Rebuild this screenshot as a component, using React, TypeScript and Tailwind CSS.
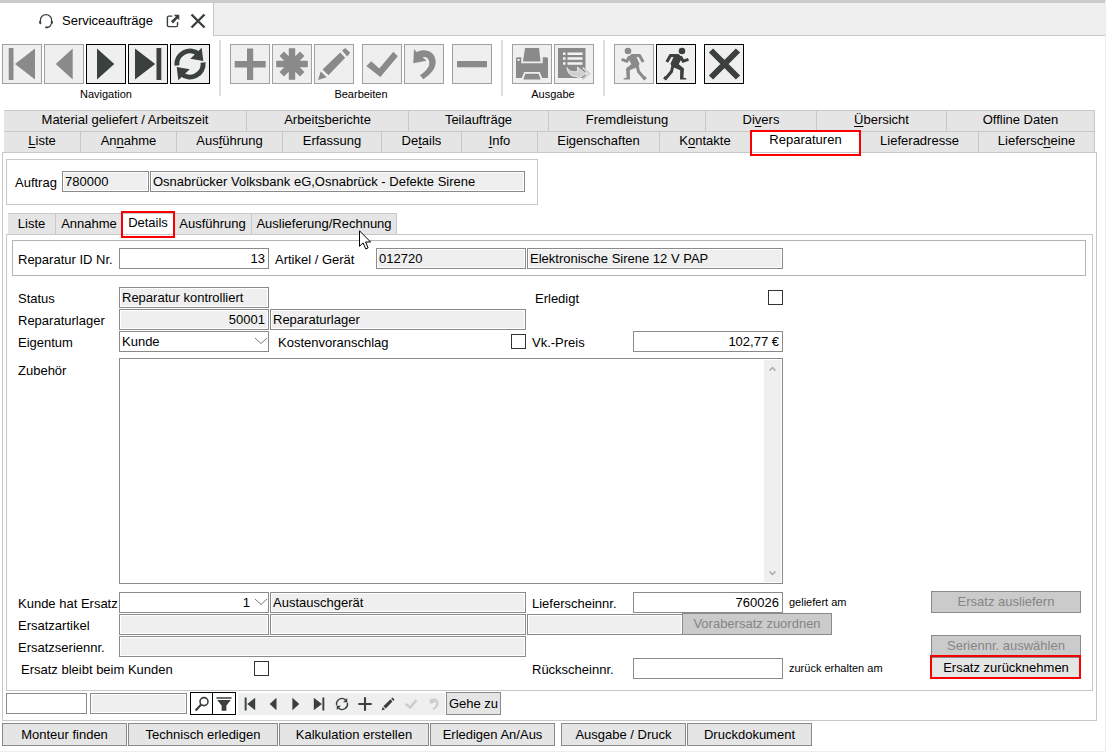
import React from 'react';
import clsx from 'clsx';

type IconProps = { className?: string };

/* ---------- Icons, drawn on a 40 x 40 grid ---------- */

const Icon: React.FC<IconProps & { children: React.ReactNode }> = ({ className = 'size-10', children }) => (
  <svg viewBox="0 0 40 40" fill="currentColor" className={clsx('shrink-0', className)} aria-hidden="true">
    {children}
  </svg>
);

const FirstIcon: React.FC<IconProps> = (p) => (
  <Icon {...p}>
    <path d="M6.7 4h4.8v32H6.7zM33 4.5v31L13 20z" />
  </Icon>
);

const PrevIcon: React.FC<IconProps> = (p) => (
  <Icon {...p}>
    <path d="M28.7 4.5v31L11.7 20z" />
  </Icon>
);

const NextIcon: React.FC<IconProps> = (p) => (
  <Icon {...p}>
    <path d="M11 4.5v31L28.3 20z" />
  </Icon>
);

const LastIcon: React.FC<IconProps> = (p) => (
  <Icon {...p}>
    <path d="M7 4.5v31L27.2 20zM28.5 4h4.8v32h-4.8z" />
  </Icon>
);

const RefreshIcon: React.FC<IconProps> = (p) => (
  <Icon {...p}>
    <path
      d="M6.9 21.500A13.200 13.200 0 0 1 29 10.500M33.100 18.500A13.200 13.200 0 0 1 11 29.500"
      fill="none"
      stroke="currentColor"
      strokeWidth="5"
    />
    <path d="M31.700 3.800l1.600 13.200-13-2.200zM8.300 36.200L6.700 23l13 2.200z" />
  </Icon>
);

const PlusIcon: React.FC<IconProps> = (p) => (
  <Icon {...p}>
    <path d="M17 4.5h6.2V17h12.5v6.4H23.2V36H17V23.4H4.7V17H17z" />
  </Icon>
);

const AsteriskIcon: React.FC<IconProps> = (p) => (
  <Icon {...p}>
    <path
      d="M20 4.2v31.6M4.2 20h31.6M9.8 9.8l20.4 20.4M30.2 9.8L9.8 30.2"
      stroke="currentColor"
      strokeWidth="6.400"
    />
  </Icon>
);

const PencilIcon: React.FC<IconProps> = (p) => (
  <Icon {...p}>
    <path d="M4 36l2.7-8.6 6 5.9zM8.5 25.5L26.2 8.4l5 5.4-16.8 17.5zM28 6.4L31.3 4l4.9 4.8-3 3.6z" />
  </Icon>
);

const CheckIcon: React.FC<IconProps> = (p) => (
  <Icon {...p}>
    <path d="M4.3 22l5-4.7 8 7.2L31.3 7.7l4.5 4.6L18.4 33z" />
  </Icon>
);

const UndoIcon: React.FC<IconProps> = (p) => (
  <Icon {...p}>
    <path d="M10 5l2.4 3C22 3.6 31.5 8 31.7 18c.1 7-6 13-12.3 17.3L16 31.3c5-3.5 9.500-8 9.300-12.600-.2-4-3-6-6.700-5.500l4 3.600-13.300 2.400z" />
  </Icon>
);

const MinusIcon: React.FC<IconProps> = (p) => (
  <Icon {...p}>
    <path d="M5 17h30v6.3H5z" />
  </Icon>
);

const PrinterIcon: React.FC<IconProps> = (p) => (
  <Icon {...p}>
    <path d="M13 4h14l1.5 13.5H11z" />
    <path d="M4 14.3l1-1h4.3v6h21.4v-6H35l1 1V34h-5.7l-2.6-6H12.3l-2.6 6H4z" />
    <path d="M13.3 29.7h13.3l2 5.8H11.3z" />
    <path d="M5.5 15h2v2h-2z" fill="#f4f4f4" />
  </Icon>
);

const ListExportIcon: React.FC<IconProps> = (p) => (
  <Icon {...p}>
    <path d="M4 4h27.5v30H4z" />
    <path
      d="M9 8.500h2.500V11H9zM13.500 8.500h15V11h-15zM9 13.200h2.500v2.500H9zM13.500 13.200h15v2.500h-15zM9 18.200h2.500v2.500H9zM13.500 18.200h15v2.500h-15z"
      fill="#f4f4f4"
    />
    <path
      d="M13 23.500c2.500 4.500 6 4.500 10.500 4v-4.500l8 6.500-8 6.500v-3.500c-6 .5-10-2.500-10.500-9z"
      fill="#cfcfcf"
      stroke="#f4f4f4"
      strokeWidth=".8"
    />
    <path d="M28.500 23.500l7 6-7 6" fill="none" stroke="#cfcfcf" strokeWidth="1.8" />
  </Icon>
);

const RunnerIcon: React.FC<IconProps> = (p) => (
  <Icon {...p}>
    <circle cx="26" cy="7" r="3.3" />
    <path d="M15.500 10h7l3.800 3.600-3.600 6.600 5.300 4.200-.6 9 3 1.200v1H24l.2-9.300-7.600-3.200-2.200-3 3.200-7.400z" />
    <path
      d="M20.500 11.500h-6l-3.700 6.500M24.500 12.500l2.700 4.700 5.300-1.800M17 21l-1.500 6.500-5.800 7-1.700-1.200"
      fill="none"
      stroke="currentColor"
      strokeWidth="3"
    />
  </Icon>
);

const CrossIcon: React.FC<IconProps> = (p) => (
  <Icon {...p}>
    <path d="M7 6.500l27 27M34 6.500l-27 27" stroke="currentColor" strokeWidth="6" />
  </Icon>
);

const HeadsetIcon: React.FC<IconProps> = (p) => (
  <Icon {...p}>
    <path d="M6 25V18a14 14 0 0 1 28 0v7M33 28c-2 5-5 8-9 8" fill="none" stroke="currentColor" strokeWidth="3" />
    <path d="M3 20h5v8H6l-3-2zM37 20h-5v8h2l3-2zM18 34h7v4h-7z" />
  </Icon>
);

const PopOutIcon: React.FC<IconProps> = (p) => (
  <Icon {...p}>
    <path d="M18 6H8q-4 0-4 4v22q0 4 4 4h21q4 0 4-4V23" fill="none" stroke="currentColor" strokeWidth="4" />
    <path d="M22 2h16v16l-5-5-13 14-6-6L28 8z" />
  </Icon>
);

const SearchIcon: React.FC<IconProps> = (p) => (
  <Icon {...p}>
    <circle cx="25" cy="14" r="10" fill="none" stroke="currentColor" strokeWidth="4" />
    <path d="M18 21L4 36" stroke="currentColor" strokeWidth="5.5" />
  </Icon>
);

const FilterIcon: React.FC<IconProps> = (p) => (
  <Icon {...p}>
    <path d="M1 3h38v4H1zM3 10h34L26 24v13H14V24z" />
  </Icon>
);

const ThinRefreshIcon: React.FC<IconProps> = (p) => (
  <Icon {...p}>
    <path d="M5 24A15.500 15.500 0 0 1 31 9M35 16A15.500 15.500 0 0 1 9 31" fill="none" stroke="currentColor" strokeWidth="4" />
    <path d="M35 3v12H23zM5 37V25h12z" />
  </Icon>
);

const ThinPlusIcon: React.FC<IconProps> = (p) => (
  <Icon {...p}>
    <path d="M20 1v38M1 20h38" stroke="currentColor" strokeWidth="6" />
  </Icon>
);

const Chevron: React.FC = () => (
  <svg
    viewBox="0 0 14 8"
    className="pointer-events-none absolute top-1.5 right-px h-2 w-3.5"
    fill="none"
    stroke="#777"
    aria-hidden="true"
  >
    <path d="M1 1l6 5.500L13 1" />
  </svg>
);

const Cursor: React.FC = () => (
  <svg viewBox="0 0 12 20" className="pointer-events-none absolute top-4 left-[107px] z-20 h-5 w-3" aria-hidden="true">
    <path
      d="M.5.8v15.500l3.600-3.400 2.600 6 2.400-1-2.500-5.900h5z"
      fill="#fff"
      stroke="#000"
      strokeLinejoin="round"
    />
  </svg>
);

/* ---------- Controls ---------- */

interface ToolButtonProps {
  label: string;
  icon: React.FC<IconProps>;
  disabled?: boolean;
  className?: string;
  mirrored?: boolean;
}

const ToolButton: React.FC<ToolButtonProps> = ({ label, icon: Glyph, disabled, className, mirrored }) => (
  <button
    type="button"
    aria-label={label}
    disabled={disabled}
    className={clsx(
      'flex size-10 shrink-0 items-center justify-center border bg-[#efefef]',
      disabled ? 'border-[#a0a0a0] text-[#8a8a8a]' : 'border-black text-[#3a403f]',
      className
    )}
  >
    <Glyph className={mirrored ? 'size-10 -scale-x-100' : 'size-10'} />
  </button>
);

const ToolGroup: React.FC<{ title?: string; children: React.ReactNode }> = ({ title, children }) => (
  <div className="flex flex-col items-center pt-1">
    <div className="flex gap-0.5">{children}</div>
    {title && <span className="pt-0.5 text-[11px] leading-4">{title}</span>}
  </div>
);

const Separator: React.FC = () => <div className="mx-[9px] h-14 w-0.5 shrink-0 bg-[#dedede]" />;

interface FieldProps extends React.InputHTMLAttributes<HTMLInputElement> {
  right?: boolean;
}

const Field: React.FC<FieldProps> = ({ right, readOnly, className, ...rest }) => (
  <input
    type="text"
    readOnly={readOnly}
    className={clsx(
      'h-[21px] min-w-0 rounded-none border border-[#8a8a8a] pb-px leading-4 outline-none',
      right ? 'pr-[3px] text-right' : 'pl-0.5',
      readOnly ? 'bg-[#efefef] shadow-[inset_0_0_0_1px_#fff]' : 'bg-white',
      className
    )}
    {...rest}
  />
);

const Check: React.FC<{ id: string }> = ({ id }) => (
  <input
    type="checkbox"
    id={id}
    className="ml-auto size-[15px] shrink-0 appearance-none border border-[#333] bg-white checked:bg-[#3a403f]"
  />
);

const Label: React.FC<{ htmlFor: string; className?: string; children: React.ReactNode }> = ({
  htmlFor,
  className,
  children,
}) => (
  <label htmlFor={htmlFor} className={clsx('h-[21px] pt-0.5 leading-5 whitespace-nowrap', className)}>
    {children}
  </label>
);

const SmallLabel: React.FC<{ htmlFor: string; children: React.ReactNode }> = ({ htmlFor, children }) => (
  <label htmlFor={htmlFor} className="pl-[5px] text-[11px] leading-5 whitespace-nowrap">
    {children}
  </label>
);

const PushButton: React.FC<React.ButtonHTMLAttributes<HTMLButtonElement>> = ({ className, disabled, ...rest }) => (
  <button
    type="button"
    disabled={disabled}
    className={clsx(
      'shrink-0 border border-[#8a8a8a] leading-5 whitespace-nowrap',
      disabled ? 'bg-[#cbcbcb] text-[#858585]' : 'bg-[#e5e5e5]',
      className
    )}
    {...rest}
  />
);

/* Frame that marks the step the user has to click */
const Highlight: React.FC<{ className: string }> = ({ className }) => (
  <span className={clsx('pointer-events-none absolute z-10 border-2 border-[#fa0000]', className)} />
);

// The underscore marks the letter that is the keyboard shortcut
const Mnemonic: React.FC<{ text: string }> = ({ text }) => {
  const [before, after] = text.split('_');
  if (after === undefined) return <>{text}</>;
  return (
    <>
      {before}
      <span className="underline underline-offset-2">{after[0]}</span>
      {after.slice(1)}
    </>
  );
};

const TabRow: React.FC<{ tabs: string[]; active?: string; className: string }> = ({ tabs, active, className }) => (
  <div role="tablist" className={clsx('grid', className)}>
    {tabs.map((tab) => (
      <button
        key={tab}
        type="button"
        role="tab"
        aria-selected={tab === active}
        className={clsx(
          'relative h-[21px] border-t border-r border-[#c8c8c8] leading-4 whitespace-nowrap',
          tab === active ? 'bg-white pb-1' : 'bg-[#e5e5e5] pb-0.5'
        )}
      >
        <Mnemonic text={tab} />
        {tab === active && <Highlight className="-top-0.5 -right-px -bottom-1 -left-px" />}
      </button>
    ))}
  </div>
);

const upperTabs = [
  'Material geliefert / Arbeitszeit',
  'Arbeit_sberichte',
  'Teilaufträge',
  'Fremdleistung',
  'Di_vers',
  '_Übersicht',
  'Offline Daten',
];

const lowerTabs = [
  '_Liste',
  'An_nahme',
  'Aus_führung',
  'Erfassung',
  'De_tails',
  '_Info',
  'Ei_genschaften',
  'K_ontakte',
  'Reparaturen',
  'Lieferadresse',
  'Liefersc_heine',
];

const recordNav: { label: string; icon: React.FC<IconProps>; disabled?: boolean }[] = [
  { label: 'Erster Datensatz', icon: FirstIcon },
  { label: 'Vorheriger Datensatz', icon: PrevIcon },
  { label: 'Nächster Datensatz', icon: NextIcon },
  { label: 'Letzter Datensatz', icon: LastIcon },
  { label: 'Neu laden', icon: ThinRefreshIcon },
  { label: 'Hinzufügen', icon: ThinPlusIcon },
  { label: 'Bearbeiten', icon: PencilIcon },
  { label: 'Speichern', icon: CheckIcon, disabled: true },
  { label: 'Verwerfen', icon: UndoIcon, disabled: true },
];

const WindowTabs: React.FC = () => (
  <header className="flex h-9 border-t-[3px] border-[#cbcbcb]">
    <div className="flex w-[213px] shrink-0 items-center pt-0.5 pl-[38px] text-[#3a403f]">
      <HeadsetIcon className="size-4" />
      <span className="pl-2 text-black">Serviceaufträge</span>
      <button type="button" aria-label="In neuem Fenster öffnen" className="ml-auto">
        <PopOutIcon className="size-3.5" />
      </button>
      <button type="button" aria-label="Schließen" className="mr-[7px] ml-2.5">
        <svg viewBox="0 0 16 16" className="size-4" stroke="currentColor" strokeWidth="2.4" aria-hidden="true">
          <path d="M1.500 1.500l13 13M14.500 1.500l-13 13" />
        </svg>
      </button>
    </div>
    <div className="grow border-b border-l border-[#c8c8c8] bg-[#efefef]" />
  </header>
);

const Toolbar: React.FC = () => (
  <div className="flex items-start pt-1 pb-2 pl-0.5">
    <ToolGroup title="Navigation">
      <ToolButton label="Erster" icon={FirstIcon} disabled />
      <ToolButton label="Vorheriger" icon={PrevIcon} disabled />
      <ToolButton label="Nächster" icon={NextIcon} />
      <ToolButton label="Letzter" icon={LastIcon} />
      <ToolButton label="Aktualisieren" icon={RefreshIcon} />
    </ToolGroup>
    <Separator />
    <ToolGroup title="Bearbeiten">
      <ToolButton label="Neu" icon={PlusIcon} disabled />
      <ToolButton label="Kopieren" icon={AsteriskIcon} disabled />
      <ToolButton label="Ändern" icon={PencilIcon} disabled />
      <ToolButton label="Übernehmen" icon={CheckIcon} disabled className="ml-1.5" />
      <ToolButton label="Rückgängig" icon={UndoIcon} disabled />
      <ToolButton label="Löschen" icon={MinusIcon} disabled className="ml-1.5" />
    </ToolGroup>
    <Separator />
    <ToolGroup title="Ausgabe">
      <ToolButton label="Drucken" icon={PrinterIcon} disabled />
      <ToolButton label="Liste ausgeben" icon={ListExportIcon} disabled />
    </ToolGroup>
    <Separator />
    <ToolGroup>
      <ToolButton label="Zurück" icon={RunnerIcon} disabled mirrored />
      <ToolButton label="Weiter" icon={RunnerIcon} />
      <ToolButton label="Beenden" icon={CrossIcon} className="ml-1.5" />
    </ToolGroup>
  </div>
);

const SubTabs: React.FC = () => (
  <div role="tablist" className="mt-2 ml-[5px] flex">
    {[
      { name: 'Liste', width: 'w-12' },
      { name: 'Annahme', width: 'w-[67px]' },
      { name: 'Details', width: 'w-[51px]' },
      { name: 'Ausführung', width: 'w-[78px]' },
      { name: 'Auslieferung/Rechnung', width: 'w-[145px]' },
    ].map(({ name, width }) => (
      <button
        key={name}
        type="button"
        role="tab"
        aria-selected={name === 'Details'}
        className={clsx(
          'relative flex h-[21px] shrink-0 justify-center border-t border-r border-[#c8c8c8] whitespace-nowrap',
          width,
          name === 'Details' ? 'bg-white leading-[18px]' : 'bg-[#e5e5e5] leading-5'
        )}
      >
        {name}
        {name === 'Details' && <Highlight className="-top-[3px] -right-0.5 -bottom-1 -left-0.5" />}
        {name === 'Auslieferung/Rechnung' && <Cursor />}
      </button>
    ))}
  </div>
);

const RepairForm: React.FC = () => (
  <section className="mx-[3px] border border-[#c8c8c8] pt-[5px] pb-[11px]">
    <div className="mr-1.5 ml-[5px] grid h-9 grid-cols-[100px_150px_105px_150px_256px] items-start gap-px border border-[#b4b4b4] px-[5px] pt-[7px]">
      <Label htmlFor="repId">Reparatur ID Nr.</Label>
      <Field id="repId" right defaultValue="13" />
      <Label htmlFor="artikel" className="pl-[5px]">
        Artikel / Gerät
      </Label>
      <Field id="artikel" readOnly value="012720" />
      <Field aria-label="Artikelbezeichnung" readOnly value="Elektronische Sirene 12 V PAP" />
    </div>

    <div className="mt-[11px] grid grid-cols-[100px_150px_256px_105px_150px_minmax(0,1fr)_150px] gap-px px-[11px]">
      <Label htmlFor="status">Status</Label>
      <Field id="status" readOnly value="Reparatur kontrolliert" />
      <Label htmlFor="erledigt" className="col-start-4 pl-2">
        Erledigt
      </Label>
      <div className="flex items-center">
        <Check id="erledigt" />
      </div>

      <Label htmlFor="lager" className="col-start-1">
        Reparaturlager
      </Label>
      <Field id="lager" readOnly right value="50001" />
      <Field aria-label="Lagerbezeichnung" readOnly value="Reparaturlager" />

      <Label htmlFor="eigentum" className="col-start-1">
        Eigentum
      </Label>
      <div className="relative h-[21px]">
        <select
          id="eigentum"
          className="block h-[21px] w-full appearance-none rounded-none border border-[#8a8a8a] bg-white pl-0.5 leading-4"
        >
          <option>Kunde</option>
        </select>
        <Chevron />
      </div>
      <div className="flex h-[21px] items-center">
        <Label htmlFor="kosten" className="pl-2">
          Kostenvoranschlag
        </Label>
        <Check id="kosten" />
      </div>
      <Label htmlFor="preis" className="pl-[5px]">
        Vk.-Preis
      </Label>
      <Field id="preis" right defaultValue="102,77 €" />

      <Label htmlFor="zubehoer" className="col-start-1 mt-1.5">
        Zubehör
      </Label>
      <div className="relative col-span-4 mt-[5px] mb-[7px] h-[226px]">
        <textarea
          id="zubehoer"
          className="block h-full w-full resize-none rounded-none border border-[#8a8a8a] bg-white p-0.5 pr-5 outline-none"
        />
        <div className="absolute inset-y-0.5 right-0.5 flex w-[17px] flex-col items-center justify-between bg-[#efefef] py-1.5 text-[#a8a8a8]">
          <svg viewBox="0 0 7 5" className="h-[5px] w-[7px]" fill="none" stroke="currentColor" strokeWidth="1.5">
            <path d="M.5 4.500l3-3 3 3" />
          </svg>
          <svg viewBox="0 0 7 5" className="h-[5px] w-[7px]" fill="none" stroke="currentColor" strokeWidth="1.5">
            <path d="M.5.5l3 3 3-3" />
          </svg>
        </div>
      </div>

      <Label htmlFor="hatErsatz" className="col-start-1">
        Kunde hat Ersatz
      </Label>
      <div className="relative h-[21px]">
        <select
          id="hatErsatz"
          className="block h-[21px] w-full appearance-none rounded-none border border-[#8a8a8a] bg-white pr-[18px] leading-4 [text-align-last:right]"
        >
          <option>1</option>
        </select>
        <Chevron />
      </div>
      <Field aria-label="Art des Ersatzes" readOnly value="Austauschgerät" />
      <Label htmlFor="liefernr" className="pl-[5px]">
        Lieferscheinnr.
      </Label>
      <Field id="liefernr" right defaultValue="760026" />
      <SmallLabel htmlFor="liefernr">geliefert am</SmallLabel>
      <PushButton disabled className="-mt-px h-[22px]">
        Ersatz ausliefern
      </PushButton>

      <Label htmlFor="ersatzartikel" className="col-start-1">
        Ersatzartikel
      </Label>
      <Field id="ersatzartikel" readOnly value="" />
      <Field aria-label="Ersatzartikel Bezeichnung" readOnly value="" />
      <div className="col-span-3 flex h-[21px] items-end">
        <Field aria-label="Ersatzartikel Zusatz" readOnly value="" className="w-[156px]" />
        <PushButton disabled className="-ml-px h-[22px] w-[150px]">
          Vorabersatz zuordnen
        </PushButton>
      </div>

      <Label htmlFor="seriennr" className="col-start-1">
        Ersatzseriennr.
      </Label>
      <Field id="seriennr" readOnly value="" className="col-span-2" />
      <PushButton disabled className="col-start-7 -mt-px h-[22px]">
        Seriennr. auswählen
      </PushButton>

      <div className="col-span-2 col-start-1 flex h-[21px] items-center">
        <Label htmlFor="bleibt" className="pl-[3px]">
          Ersatz bleibt beim Kunden
        </Label>
        <Check id="bleibt" />
      </div>
      <Label htmlFor="rueckNr" className="col-start-4 pl-[5px]">
        Rückscheinnr.
      </Label>
      <Field id="rueckNr" />
      <SmallLabel htmlFor="rueckNr">zurück erhalten am</SmallLabel>
      <div className="relative -mt-px flex h-[22px]">
        <PushButton className="grow">Ersatz zurücknehmen</PushButton>
        <Highlight className="-top-0.5 right-0 bottom-0 -left-px" />
      </div>
    </div>
  </section>
);

const RecordBar: React.FC = () => (
  <div className="mt-px ml-[3px] flex h-[23px] items-center">
    <Field aria-label="Suchbegriff" className="w-[81px]" />
    <Field aria-label="Suchfeld" readOnly value="" className="ml-[3px] w-[97px]" />
    <button
      type="button"
      aria-label="Suchen"
      className="ml-[3px] flex h-[23px] w-[23px] items-center justify-center border border-black text-[#3a403f]"
    >
      <SearchIcon className="size-4" />
    </button>
    <button
      type="button"
      aria-label="Filtern"
      className="-ml-px flex h-[23px] w-6 items-center justify-center border border-black text-[#3a403f]"
    >
      <FilterIcon className="size-4" />
    </button>
    <div className="ml-0.5 flex h-[22px] bg-[#efefef]">
      {recordNav.map(({ label, icon: Glyph, disabled }) => (
        <button
          key={label}
          type="button"
          aria-label={label}
          disabled={disabled}
          className={clsx(
            'flex w-[23px] items-center justify-center',
            disabled ? 'text-[#cdcdcd]' : 'text-[#3a403f]'
          )}
        >
          <Glyph className={Glyph === ThinRefreshIcon || Glyph === ThinPlusIcon ? 'size-3.5' : 'size-4'} />
        </button>
      ))}
    </div>
    <PushButton className="ml-px h-[23px] w-[55px]">Gehe zu</PushButton>
  </div>
);

const ActionBar: React.FC = () => (
  <footer className="mt-0.5 flex gap-px pb-[5px] pl-0.5">
    <PushButton className="h-[23px] w-[125px]">Monteur finden</PushButton>
    <PushButton className="h-[23px] w-[150px]">Technisch erledigen</PushButton>
    <PushButton className="h-[23px] w-[150px]">Kalkulation erstellen</PushButton>
    <PushButton className="h-[23px] w-[125px]">Erledigen An/Aus</PushButton>
    <PushButton className="ml-[5px] h-[23px] w-[125px]">Ausgabe / Druck</PushButton>
    <PushButton className="h-[23px] w-[125px]">Druckdokument</PushButton>
  </footer>
);

const App: React.FC = () => {
  return (
    <div className="min-h-screen border-r border-b border-[#ececec] bg-white font-['Liberation_Sans',Arial,sans-serif] text-[13px] text-black">
      <WindowTabs />
      <Toolbar />

      <div className="mr-2.5 ml-1">
        <TabRow tabs={upperTabs} className="grid-cols-[243fr_162fr_140fr_157fr_111fr_130fr_148fr]" />
        <TabRow
          tabs={lowerTabs}
          active="Reparaturen"
          className="grid-cols-[77fr_96fr_106fr_99fr_80fr_76fr_122fr_91fr_110fr_118fr_116fr]"
        />
      </div>

      <main className="mr-2 ml-0.5 border border-[#c8c8c8] pt-1.5 pb-[5px]">
        <div className="ml-[3px] flex h-[46px] w-[532px] border border-[#c8c8c8] pt-[11px] pl-2">
          <Label htmlFor="auftrag" className="w-[47px]">
            Auftrag
          </Label>
          <Field id="auftrag" readOnly value="780000" className="w-[87px]" />
          <Field
            aria-label="Auftragsbezeichnung"
            readOnly
            value="Osnabrücker Volksbank eG,Osnabrück - Defekte Sirene"
            className="ml-px w-[375px]"
          />
        </div>
        <SubTabs />
        <RepairForm />
        <RecordBar />
      </main>

      <ActionBar />
    </div>
  );
};

export default App;
